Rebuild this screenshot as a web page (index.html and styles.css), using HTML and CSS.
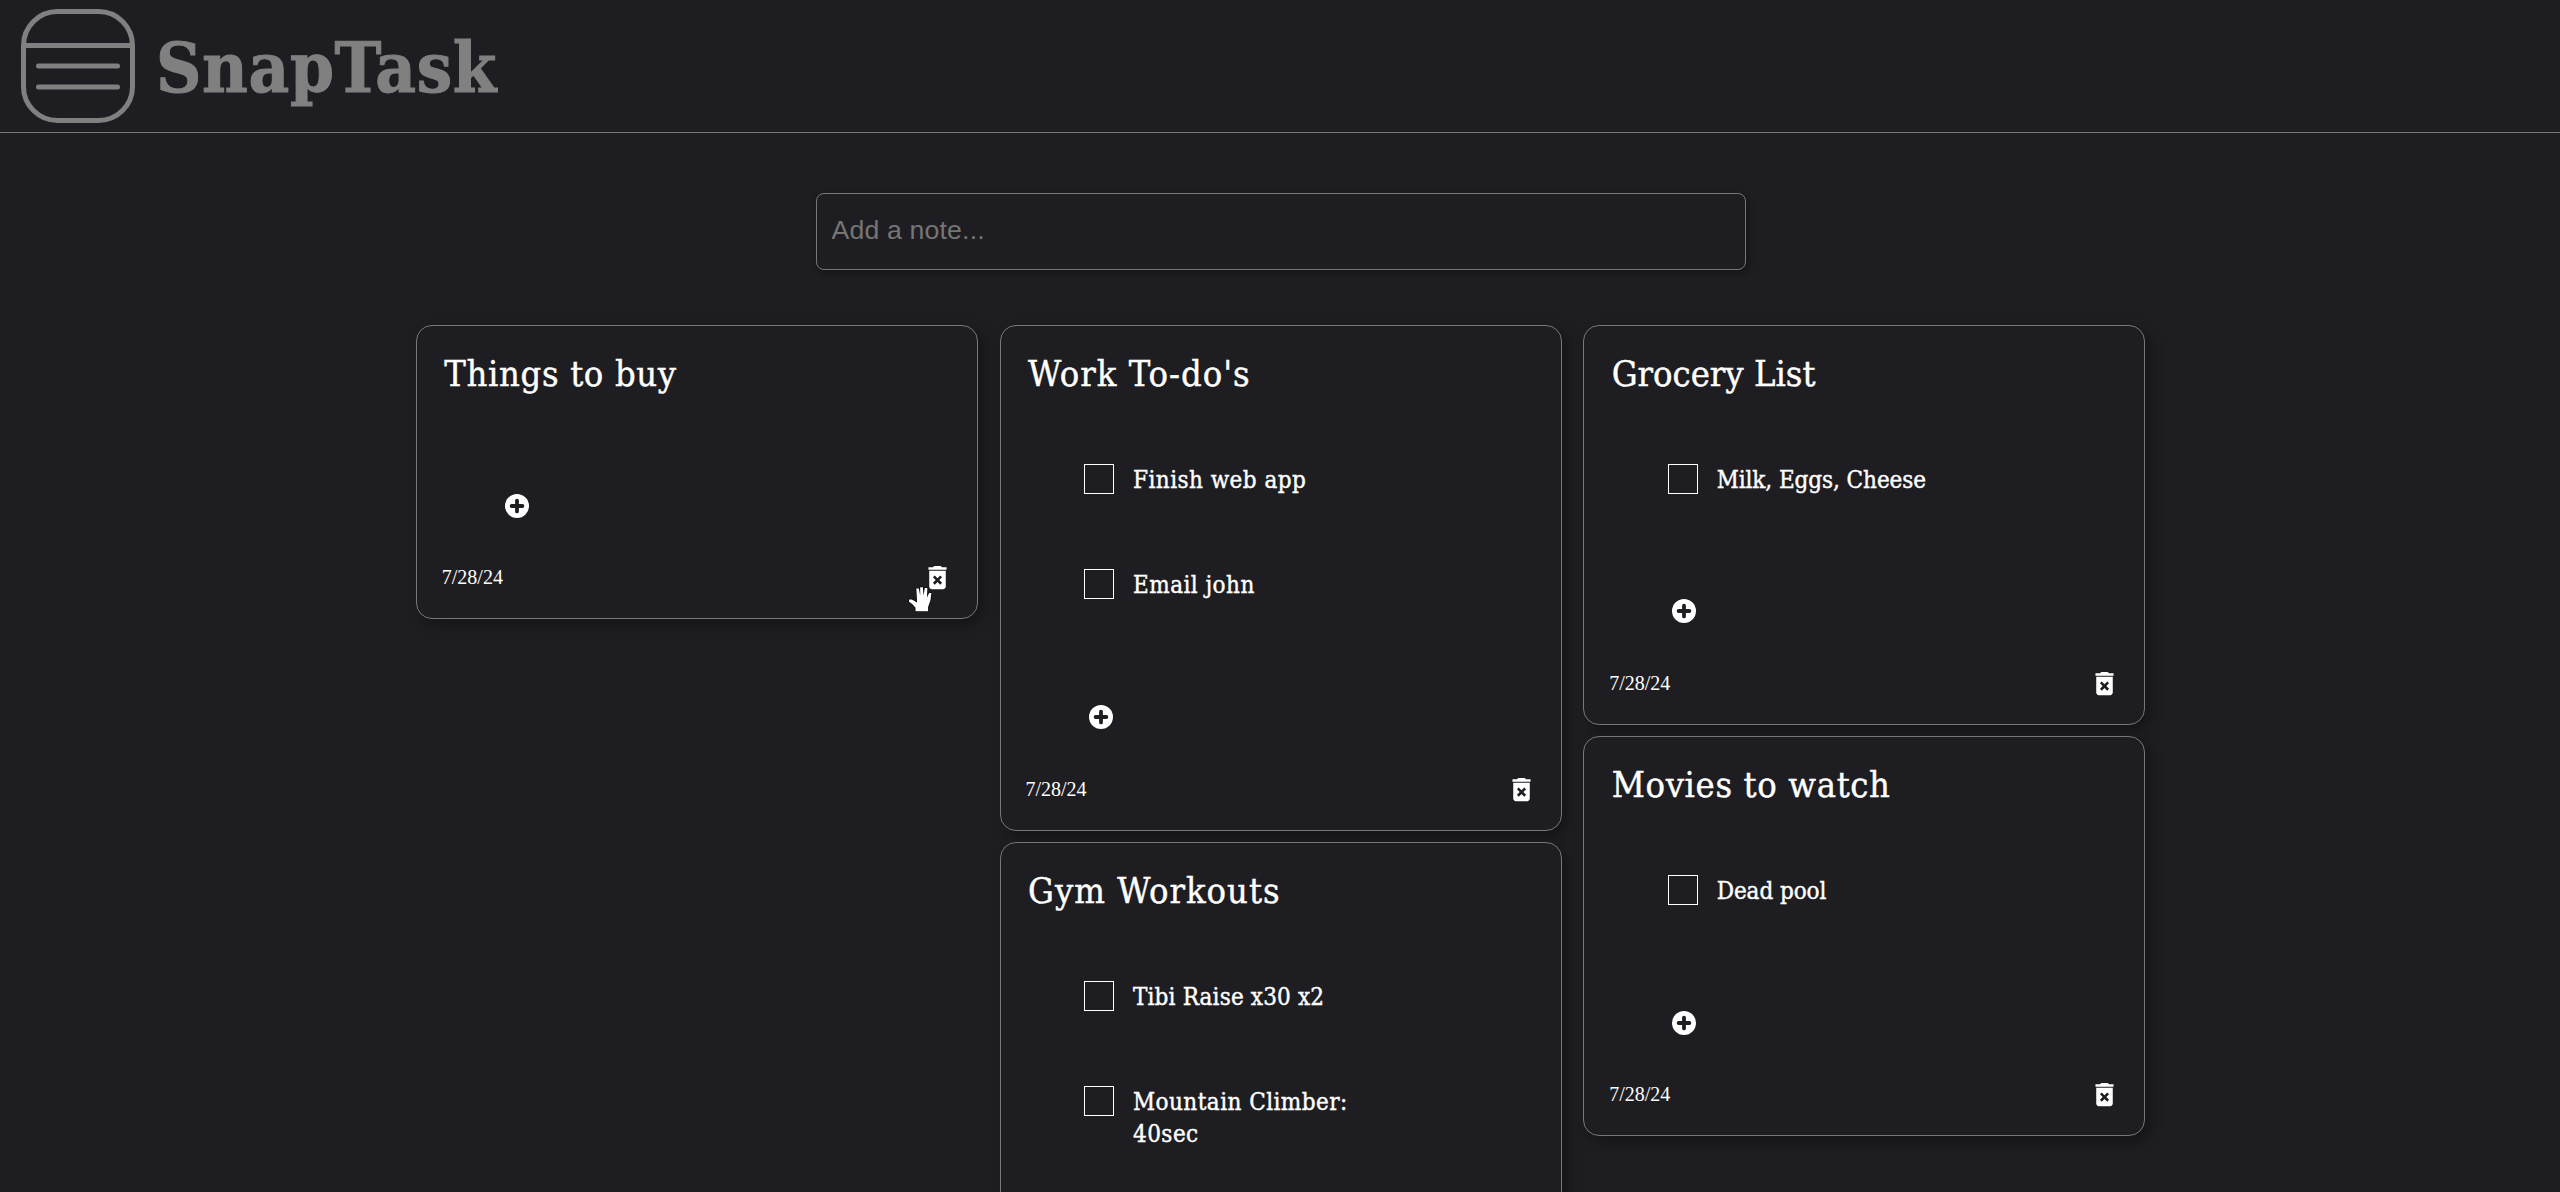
FILE: index.html
```
<!DOCTYPE html>
<html lang="en">
<head>
<meta charset="utf-8">
<title>SnapTask</title>
<link rel="stylesheet" href="styles.css">
</head>
<body>
<svg class="sprite" aria-hidden="true">
  <symbol id="icon-add" viewBox="0 0 24 24">
    <circle cx="12" cy="12" r="12" fill="#fff"/>
    <path d="M12 6.6v10.8M6.6 12h10.8" stroke="#1e1e22" stroke-width="3.8" stroke-linecap="round"/>
  </symbol>
  <symbol id="icon-delete" viewBox="0 0 24 24">
    <path fill="#fff" d="M5.600 19c0 1.100.9 2 2 2h8.800c1.100 0 2-.9 2-2V6.800H5.600V19zm2.860-7.120l1.410-1.410L12 12.590l2.120-2.120 1.410 1.410L13.410 14l2.120 2.120-1.410 1.410L12 15.410l-2.120 2.120-1.410-1.410L10.590 14l-2.130-2.120zM15.500 4l-1-1h-5l-1 1H5v2h14V4z"/>
  </symbol>
</svg>

<header class="header">
  <svg class="logo" viewBox="0 0 116 116" fill="none" stroke="#808080" stroke-width="5" stroke-linecap="round">
    <rect x="3.500" y="3.500" width="109" height="109" rx="34"/>
    <path d="M4 37.500h108"/>
    <path d="M18.500 58h79M18.500 79h79"/>
  </svg>
  <h1 class="brand">SnapTask</h1>
</header>

<main>
  <input class="new-note" type="text" placeholder="Add a note...">

  <div class="board">
    <div class="column">
      <section class="note">
        <h2 class="note-title snug">Things to buy</h2>
        <ul class="items"></ul>
        <svg class="add"><use href="#icon-add"/></svg>
        <footer class="note-footer"><span class="date">7/28/24</span><svg class="delete"><use href="#icon-delete"/></svg></footer>
        <svg class="hand" viewBox="0 0 27 27">
          <path d="M8.300 2.500h2.600l1.300 7V1.200h2.700l.6 8.300 1.300-7.500h2.600l-.4 9.600 2.100-4.600h2.300l-.9 7.200-2.400 6.800v4.200H7.500v-3.400L4.200 18 1 15.700v-2.300h2.900l5.200 3.200z" fill="#fff" stroke="#000" stroke-width="1.200" stroke-linejoin="round" paint-order="stroke"/>
        </svg>
      </section>
    </div>

    <div class="column">
      <section class="note">
        <h2 class="note-title wide">Work To-do's</h2>
        <ul class="items">
          <li class="item"><span class="box"></span><span class="label">Finish web app</span></li>
          <li class="item"><span class="box"></span><span class="label">Email john</span></li>
        </ul>
        <svg class="add"><use href="#icon-add"/></svg>
        <footer class="note-footer"><span class="date">7/28/24</span><svg class="delete"><use href="#icon-delete"/></svg></footer>
      </section>
      <section class="note">
        <h2 class="note-title wide">Gym Workouts</h2>
        <ul class="items">
          <li class="item"><span class="box"></span><span class="label plain">Tibi Raise x30 x2</span></li>
          <li class="item"><span class="box"></span><span class="label">Mountain Climber: 40sec</span></li>
        </ul>
      </section>
    </div>

    <div class="column">
      <section class="note">
        <h2 class="note-title">Grocery List</h2>
        <ul class="items">
          <li class="item"><span class="box"></span><span class="label tight">Milk, Eggs, Cheese</span></li>
        </ul>
        <svg class="add"><use href="#icon-add"/></svg>
        <footer class="note-footer"><span class="date">7/28/24</span><svg class="delete"><use href="#icon-delete"/></svg></footer>
      </section>
      <section class="note">
        <h2 class="note-title snug">Movies to watch</h2>
        <ul class="items">
          <li class="item"><span class="box"></span><span class="label tight">Dead pool</span></li>
        </ul>
        <svg class="add"><use href="#icon-add"/></svg>
        <footer class="note-footer"><span class="date">7/28/24</span><svg class="delete"><use href="#icon-delete"/></svg></footer>
      </section>
    </div>
  </div>
</main>
</body>
</html>
```
FILE: styles.css
```
* {
  box-sizing: border-box;
}

body {
  margin: 0;
  height: 1192px;
  overflow: hidden;
  background: #1e1e22;
  color: #fff;
  font-family: "Roboto Slab", "DejaVu Serif Condensed", "DejaVu Serif", serif;
}

.sprite {
  display: none;
}

.header {
  display: flex;
  align-items: flex-start;
  gap: 20px;
  height: 133px;
  padding: 8px 20px;
  border-bottom: 1px solid #77777b;
}

.logo {
  width: 116px;
  height: 116px;
}

.brand {
  margin: 0;
  padding-top: 20px;
  color: #808080;
  font-size: 70px;
  line-height: 80px;
  letter-spacing: 0.6px;
  -webkit-text-stroke: 1px #808080;
}

main {
  display: flex;
  flex-direction: column;
  align-items: center;
  padding: 60px 0 0 1px;
}

.new-note {
  width: 930px;
  height: 77px;
  padding: 0 15px 3px;
  background: transparent;
  border: 1px solid #77777b;
  border-radius: 8px;
  box-shadow: 2px 3px 7px rgba(0, 0, 0, 0.35);
  color: #fff;
  font: 26.700px "Liberation Sans", Arial, sans-serif;
  letter-spacing: 0.15px;
}

.new-note::placeholder {
  color: #757575;
}

.board {
  display: grid;
  grid-template-columns: repeat(3, 562px);
  column-gap: 21.700px;
  align-items: start;
  margin-top: 55px;
}

.column {
  display: flex;
  flex-direction: column;
  gap: 11.500px;
}

.note {
  position: relative;
  display: flex;
  flex-direction: column;
  padding: 24px 24px 25px 25px;
  background: #1e1e22;
  border: 1px solid #77777b;
  border-radius: 16px;
  box-shadow: 5px 5px 13px rgba(0, 0, 0, 0.35);
}

.note-title {
  margin: 0 0 0 2.500px;
  font-size: 36px;
  font-weight: 400;
  line-height: 48px;
  -webkit-text-stroke: 0.4px #fff;
}

.snug {
  letter-spacing: 0.65px;
}

.wide {
  letter-spacing: 1px;
}

.items {
  margin: 65.500px 0 0;
  padding: 0 0 0 58.500px;
  list-style: none;
}

.item {
  display: flex;
  gap: 19px;
  height: 105.800px;
}

.box {
  flex: none;
  width: 30px;
  height: 30px;
  border: 1px solid #fff;
}

.label {
  width: 230px;
  font-size: 24px;
  line-height: 32px;
  letter-spacing: 0.45px;
  -webkit-text-stroke: 0.4px #fff;
}

.plain {
  letter-spacing: 0.15px;
}

.tight {
  letter-spacing: -0.08px;
}

.add {
  width: 24px;
  height: 24px;
  margin: 30px 0 0 63px;
}

.note-footer {
  display: flex;
  align-items: center;
  justify-content: space-between;
  height: 31px;
  margin-top: 44.500px;
}

.date {
  font-family: "Liberation Serif", "Times New Roman", serif;
  font-size: 20px;
}

.delete {
  width: 31px;
  height: 31px;
}

/* Grab hand hovering over the note while it is dragged */
.hand {
  position: absolute;
  right: 42px;
  bottom: 5px;
  width: 27px;
  height: 27px;
}
```
